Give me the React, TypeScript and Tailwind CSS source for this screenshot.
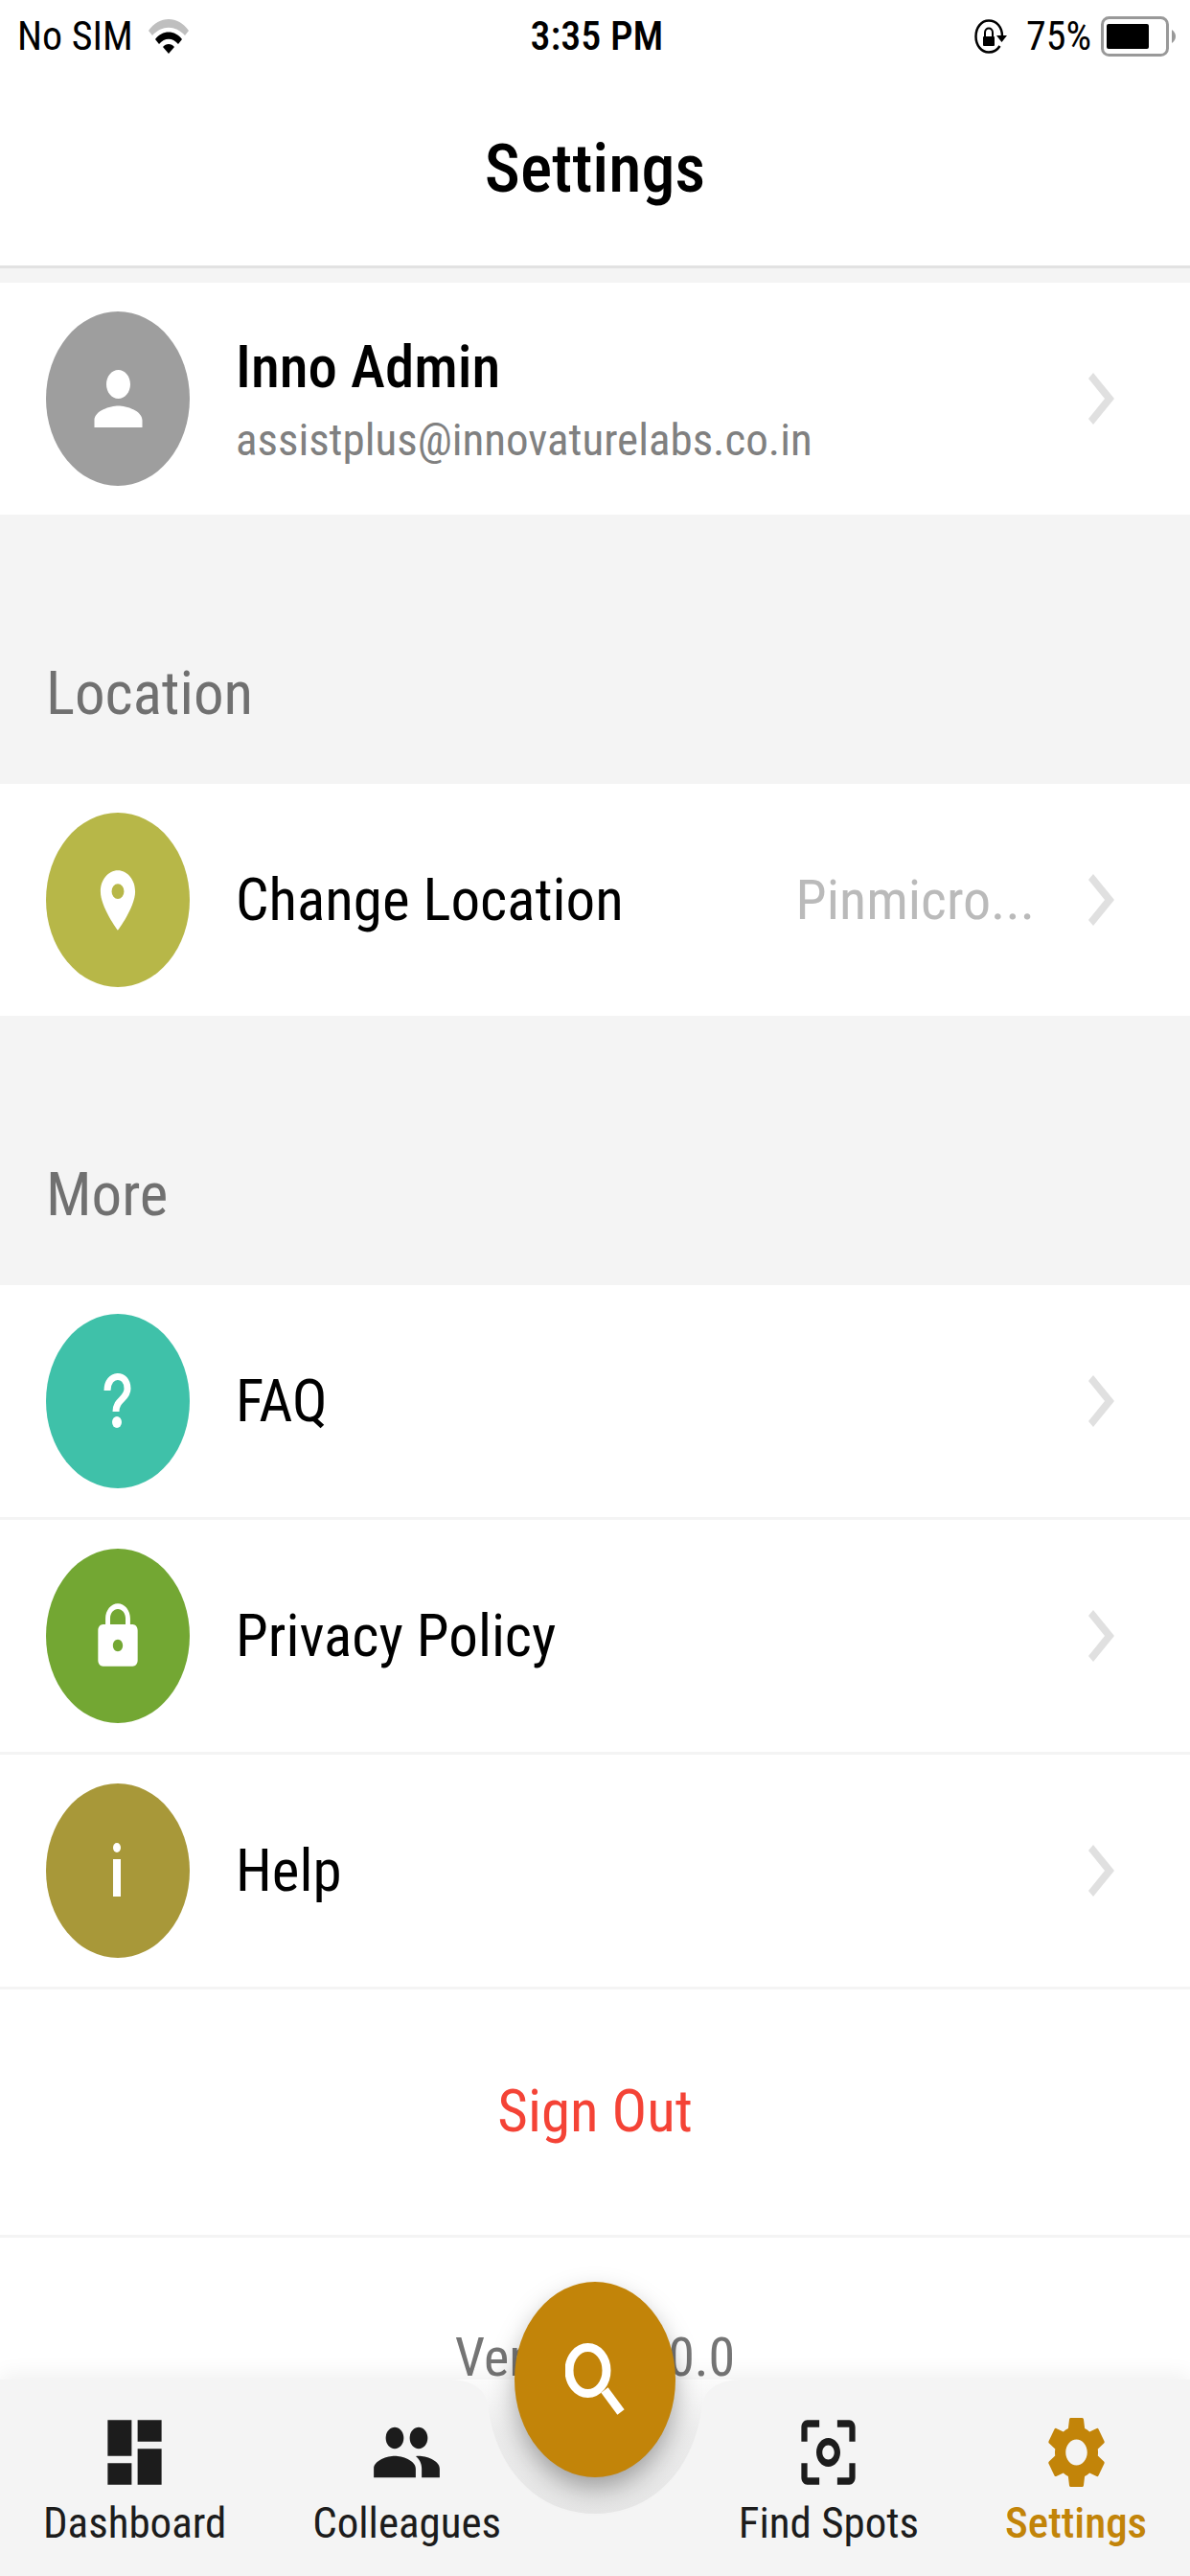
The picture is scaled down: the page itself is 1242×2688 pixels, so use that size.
import type { ComponentType, ReactNode, SVGProps } from 'react'
import {
  MdCenterFocusWeak,
  MdDashboard,
  MdLocationOn,
  MdLock,
  MdPeople,
  MdPerson,
  MdSettings,
} from 'react-icons/md'

type Icon = ComponentType<SVGProps<SVGSVGElement>>

function StatusBar() {
  return (
    <div className="grid h-19 grid-cols-3 items-center pr-[14px] pl-[18px] text-[42px] leading-none">
      <div className="flex items-center gap-4">
        <span>No SIM</span>
        <svg viewBox="0 0 42 36" className="h-9 w-[42px]" aria-hidden="true">
          <path d="M0 12C11-4 31-4 42 12L38 17C28 6 14 6 4 17Z" fill="#bfbfbf" />
          <path d="M7 21C14 11 28 11 35 21L31 26C25 19 17 19 11 26Z" />
          <path d="M15 29C18 25 24 25 27 29L21 36Z" />
        </svg>
      </div>
      <span className="text-center font-medium">3:35 PM</span>
      <div className="flex items-center justify-end">
        <svg viewBox="0 0 34 36" className="mr-5 h-9 w-[34px]" aria-hidden="true">
          <path
            d="M29 18C29 8 23 1.500 15 1.500S1.500 9 1.500 18 7 34.500 15 34.500C20 34.500 24 32 26.500 28"
            fill="none"
            stroke="#000"
            strokeWidth="2.500"
          />
          <path d="M23 17H34L28.500 24Z" />
          <rect x="9" y="18" width="12" height="10" rx="1" />
          <path d="M11 19V14C11 8 19 8 19 14V19" fill="none" stroke="#000" strokeWidth="2" />
        </svg>
        <span className="mr-[10px]">75%</span>
        <svg viewBox="0 0 79 42" className="h-[42px] w-[79px]" aria-hidden="true">
          <rect x="1.500" y="1.500" width="68" height="39" rx="7" fill="none" stroke="#999" strokeWidth="3" />
          <rect x="6" y="8" width="44" height="26" rx="2" />
          <path d="M74 14Q78 17 78 21T74 28Z" fill="#999" />
        </svg>
      </div>
    </div>
  )
}

function Chevron() {
  return (
    <svg viewBox="0 0 27 54" className="h-[54px] w-[27px] shrink-0" aria-hidden="true">
      <path d="M0 6L5 0L27 27L5 54L0 48L17 27Z" fill="#e0e0e0" />
    </svg>
  )
}

function QuestionMark(props: SVGProps<SVGSVGElement>) {
  return (
    <svg viewBox="0 0 62 75" {...props}>
      <path
        d="M20 26C20 7 41 7 41 24C41 35 29 35 29 48"
        fill="none"
        stroke="currentColor"
        strokeWidth="7"
      />
      <ellipse cx="30" cy="59" rx="5" ry="6" fill="currentColor" />
    </svg>
  )
}

function InfoMark(props: SVGProps<SVGSVGElement>) {
  return (
    <svg viewBox="0 0 62 75" {...props}>
      <ellipse cx="30" cy="13" rx="4" ry="5" fill="currentColor" />
      <rect x="26" y="25" width="8" height="39" fill="currentColor" />
    </svg>
  )
}

interface RowProps {
  icon: Icon
  color: string
  iconSize?: string
  value?: string
  children: ReactNode
}

function Row({ icon: RowIcon, color, iconSize = 'h-[75px] w-[62px]', value, children }: RowProps) {
  return (
    <a href="#" className="flex shrink-0 items-center bg-white py-[30px] pr-[79px] pl-12">
      <span className={`flex h-[182px] w-[150px] shrink-0 items-center justify-center rounded-[50%] text-white ${color}`}>
        <RowIcon className={iconSize} preserveAspectRatio="none" aria-hidden="true" />
      </span>
      <span className="ml-12 flex flex-1 flex-col text-[61px] leading-[86px]">{children}</span>
      {value && <span className="mr-14 text-[58px] leading-[86px] text-[#bababa]">{value}</span>}
      <Chevron />
    </a>
  )
}

function SectionTitle({ children }: { children: ReactNode }) {
  return (
    <h2 className="flex h-[281px] shrink-0 items-end px-12 pb-[54px] text-[63px] leading-[80px] text-[#707070]">
      {children}
    </h2>
  )
}

function NavItem({ icon: NavIcon, label, active }: { icon: Icon; label: string; active?: boolean }) {
  return (
    <a
      href="#"
      aria-current={active ? 'page' : undefined}
      className={`flex flex-col items-center ${active ? 'font-medium text-[#c28409]' : 'text-[#1c1c1c]'}`}
    >
      <NavIcon className="h-[90px] w-[75px]" preserveAspectRatio="none" aria-hidden="true" />
      <span className="text-[45px] leading-[58px]">{label}</span>
    </a>
  )
}

function BottomNav() {
  return (
    <nav className="relative flex h-[205px] shrink-0 justify-around bg-[#f4f4f4] pt-[31px] shadow-[0_-6px_20px_rgba(0,0,0,0.06)]">
      {/* cut-out behind the search button */}
      <svg viewBox="0 0 300 142" className="absolute top-0 left-1/2 h-[142px] w-[300px] -translate-x-1/2" aria-hidden="true">
        <defs>
          <linearGradient id="notch" x1="0" y1="0" x2="0" y2="1">
            <stop offset="0" stopColor="#fbfbfb" />
            <stop offset="0.400" stopColor="#ececec" />
            <stop offset="1" stopColor="#e6e6e6" />
          </linearGradient>
        </defs>
        <path
          d="M0 0C20 1 34 8 38 25C46 96 92 140 150 140C208 140 254 96 262 25C266 8 280 1 300 0Z"
          fill="url(#notch)"
        />
      </svg>
      <NavItem icon={MdDashboard} label="Dashboard" />
      <NavItem icon={MdPeople} label="Colleagues" />
      <span className="w-[68px]" />
      <NavItem icon={MdCenterFocusWeak} label="Find Spots" />
      <NavItem icon={MdSettings} label="Settings" active />
      <button
        type="button"
        aria-label="Search"
        className="absolute -top-[102px] left-1/2 flex h-[204px] w-[168px] -translate-x-1/2 items-center justify-center rounded-[50%] bg-[#c28409] shadow-[0_12px_28px_-2px_rgba(0,0,0,0.35)]"
      >
        <svg viewBox="0 0 62 76" className="h-[76px] w-[62px]" fill="none" stroke="#fff" aria-hidden="true">
          <ellipse cx="23.500" cy="28.500" rx="19.500" ry="24" strokeWidth="9" />
          <path d="M41 49L58 72" strokeWidth="9" />
        </svg>
      </button>
    </nav>
  )
}

export default function App() {
  return (
    <div className="flex h-screen flex-col bg-[#f4f4f4] font-['Roboto_Condensed','Liberation_Sans_Narrow',Roboto,sans-serif] text-black">
      <header className="shrink-0 border-b-3 border-[#e2e2e2] bg-white">
        <StatusBar />
        <h1 className="flex h-[201px] items-center justify-center text-[70px] font-medium">Settings</h1>
      </header>

      <main className="flex min-h-0 flex-1 flex-col overflow-hidden pt-[15px]">
        <Row icon={MdPerson} color="bg-[#9e9e9e]" iconSize="h-[90px] w-[75px]">
          <span className="font-medium">Inno Admin</span>
          <span className="text-[47px] leading-[66px] text-[#808080]">assistplus@innovaturelabs.co.in</span>
        </Row>

        <SectionTitle>Location</SectionTitle>
        <Row icon={MdLocationOn} color="bg-[#b7b748]" value="Pinmicro...">
          Change Location
        </Row>

        <SectionTitle>More</SectionTitle>
        <div className="flex flex-1 flex-col gap-[3px]">
          <Row icon={QuestionMark} color="bg-[#3fc1a9]">
            FAQ
          </Row>
          <Row icon={MdLock} color="bg-[#73a733]">
            Privacy Policy
          </Row>
          <Row icon={InfoMark} color="bg-[#a89839]">
            Help
          </Row>
          <button type="button" className="h-64 shrink-0 bg-white text-[61px] text-[#f44336]">
            Sign Out
          </button>
          <p className="flex-1 bg-white pt-[104px] text-center text-[56px] leading-[42px] text-[#757575]">
            Version 1.0.0
          </p>
        </div>
      </main>

      <BottomNav />
    </div>
  )
}
